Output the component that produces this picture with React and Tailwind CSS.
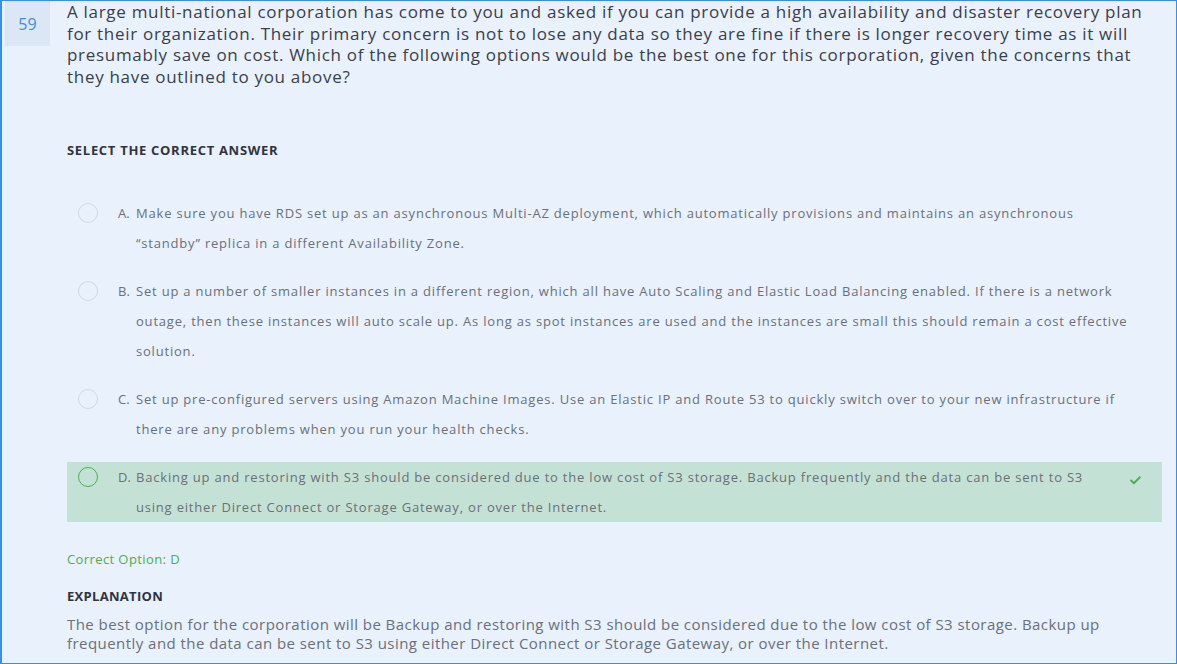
import { Check } from "lucide-react";

const options = [
  {
    key: "A",
    lines: [
      "Make sure you have RDS set up as an asynchronous Multi-AZ deployment, which automatically provisions and maintains an asynchronous",
      "\u201cstandby\u201d replica in a different Availability Zone.",
    ],
  },
  {
    key: "B",
    lines: [
      "Set up a number of smaller instances in a different region, which all have Auto Scaling and Elastic Load Balancing enabled. If there is a network",
      "outage, then these instances will auto scale up. As long as spot instances are used and the instances are small this should remain a cost effective",
      "solution.",
    ],
  },
  {
    key: "C",
    lines: [
      "Set up pre-configured servers using Amazon Machine Images. Use an Elastic IP and Route 53 to quickly switch over to your new infrastructure if",
      "there are any problems when you run your health checks.",
    ],
  },
  {
    key: "D",
    correct: true,
    lines: [
      "Backing up and restoring with S3 should be considered due to the low cost of S3 storage. Backup frequently and the data can be sent to S3",
      "using either Direct Connect or Storage Gateway, or over the Internet.",
    ],
  },
];

function Option({ opt }) {
  return (
    <div className={`flex items-start ${opt.correct ? "bg-[#c4e1d5]" : ""}`}>
      <div className="w-[42px] flex justify-center pt-[5px] shrink-0">
        <div
          className={`w-[20px] h-[20px] rounded-full border ${
            opt.correct ? "border-[#4caf50]" : "border-[#d3dae3]"
          }`}
        />
      </div>
      <span className="ml-[9px] w-[18px] shrink-0 leading-[30px] text-[#6b7079]">{opt.key}.</span>
      <div className="flex-1 leading-[30px] text-[#6b7079] whitespace-nowrap tracking-[0.8px]">
        {opt.lines.map((l, i) => (
          <div key={i}>{l}</div>
        ))}
      </div>
      {opt.correct && (
        <div className="w-[54px] flex justify-center pt-[12px]">
          <Check size={13} strokeWidth={3.5} className="text-[#4caf50]" />
        </div>
      )}
    </div>
  );
}

export default function App() {
  return (
    <div
      className="w-[1177px] h-[664px] overflow-hidden bg-[#e8f1fc] border border-l-2 border-[#3b8ee8] flex"
      style={{ fontFamily: "'Open Sans', 'Liberation Sans', sans-serif" }}
    >
      {/* QUESTION NUMBER */}
      <div className="pl-[3px] shrink-0">
        <div className="w-[45px] h-[45px] bg-[#dce7f5] text-[#3d8fe0] text-[16px] flex items-center justify-center">
          59
        </div>
      </div>

      <div className="ml-[17px] flex-1 pr-[14px]">
        {/* QUESTION */}
        <p className="text-[17px] leading-[21.7px] text-[#3a3f4a] tracking-[0.7px] whitespace-nowrap">
          A large multi-national corporation has come to you and asked if you can provide a high availability and disaster recovery plan
          <br />
          for their organization. Their primary concern is not to lose any data so they are fine if there is longer recovery time as it will
          <br />
          presumably save on cost. Which of the following options would be the best one for this corporation, given the concerns that
          <br />
          they have outlined to you above?
        </p>

        {/* SELECT */}
        <p className="mt-[53px] text-[13px] font-bold text-[#2f3440] tracking-[0.7px]">SELECT THE CORRECT ANSWER</p>

        {/* OPTIONS */}
        <div className="mt-[38px] text-[13px] flex flex-col gap-[18px]">
          {options.map((o) => (
            <Option key={o.key} opt={o} />
          ))}
        </div>

        {/* CORRECT */}
        <p className="mt-[28px] text-[13px] text-[#4caf50] tracking-[0.4px]">Correct Option: D</p>

        {/* EXPLANATION */}
        <p className="mt-[17px] text-[13px] font-bold text-[#2f3440] tracking-[0.3px]">EXPLANATION</p>
        <p className="mt-[9px] text-[15px] leading-[19px] text-[#6b7079] whitespace-nowrap tracking-[0.45px]">
          The best option for the corporation will be Backup and restoring with S3 should be considered due to the low cost of S3 storage. Backup up
          <br />
          frequently and the data can be sent to S3 using either Direct Connect or Storage Gateway, or over the Internet.
        </p>
      </div>
    </div>
  );
}
